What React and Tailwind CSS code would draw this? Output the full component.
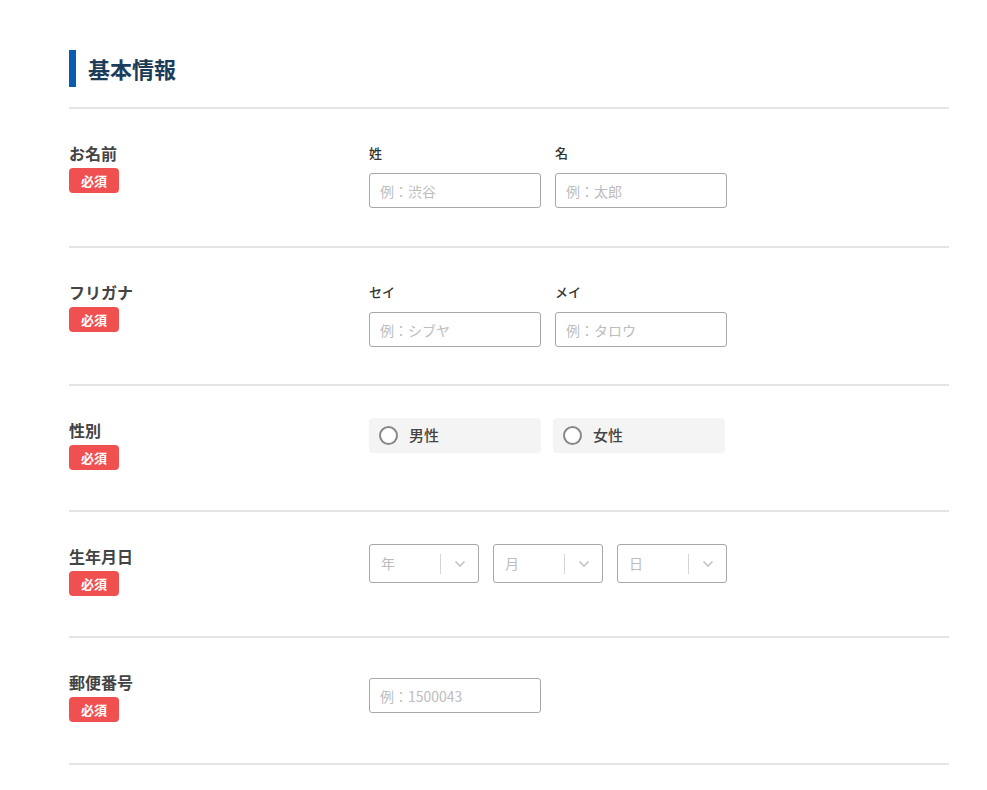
import React from "react";

const font = { fontFamily: '"Noto Sans CJK JP", "Noto Sans", sans-serif' };

function Required() {
  return (
    <span className="mt-[3px] flex h-[25px] w-[50px] items-center justify-center rounded-[4px] bg-[#f05050] text-[13px] font-bold text-white">
      必須
    </span>
  );
}

function Row({ label, gap = "gap-[14px]", pb = "pb-[40px]", children }) {
  return (
    <div className={`flex border-b-2 border-[#e4e4e4] pt-[32px] ${pb}`}>
      <div className="w-[300px] shrink-0">
        <div className="text-[16px] font-bold leading-6 text-[#444]">{label}</div>
        <Required />
      </div>
      <div className={`flex ${gap}`}>{children}</div>
    </div>
  );
}

function TextField({ sub, placeholder, extra = "" }) {
  return (
    <div className={`flex w-[172px] flex-col ${extra}`}>
      {sub && <div className="mb-[8px] text-[13px] font-medium leading-6 text-[#333]">{sub}</div>}
      <input
        placeholder={placeholder}
        className="h-[35px] w-full rounded-[3px] border border-[#a8a8a8] px-[10px] text-[14px] text-[#333] placeholder:text-[#bdbdbd] outline-none"
      />
    </div>
  );
}

function Radio({ label }) {
  return (
    <label className="flex h-[35px] w-[172px] items-center gap-[11px] rounded-[4px] bg-[#f4f4f4] px-[10px] text-[15px] font-medium text-[#444]">
      <span className="h-[19px] w-[19px] rounded-full border-2 border-[#888] bg-white" />
      {label}
    </label>
  );
}

function SelectBox({ label }) {
  return (
    <div className="flex h-[39px] w-[110px] items-center rounded-[3px] border border-[#a8a8a8]">
      <span className="flex-1 pl-[11px] text-[14px] text-[#bdbdbd]">{label}</span>
      <span className="h-[20px] w-px bg-[#d4d4d4]" />
      <span className="flex w-[37px] items-center justify-center">
        <svg width="12" height="8" viewBox="0 0 12 8" fill="none">
          <path d="M1.5 1.5 6 6l4.5-4.5" stroke="#c4c4c4" strokeWidth="1.6" />
        </svg>
      </span>
    </div>
  );
}

export default function App() {
  return (
    <div className="min-h-screen bg-white pt-[50px] pl-[69px]" style={font}>
      <div className="w-[880px]">
        {/* heading */}
        <div className="flex items-center gap-[12px] border-b-2 border-[#e4e4e4] pb-[20px]">
          <span className="h-[37px] w-[7px] bg-[#0a5cb0]" />
          <h2 className="text-[22px] font-bold text-[#1c3d5a]">基本情報</h2>
        </div>

        <Row label="お名前" pb="pb-[38px]">
          <TextField sub="姓" placeholder="例：渋谷" />
          <TextField sub="名" placeholder="例：太郎" />
        </Row>

        <Row label="フリガナ" pb="pb-[37px]">
          <TextField sub="セイ" placeholder="例：シブヤ" />
          <TextField sub="メイ" placeholder="例：タロウ" />
        </Row>

        <Row label="性別" gap="gap-[12px]">
          <Radio label="男性" />
          <Radio label="女性" />
        </Row>

        <Row label="生年月日">
          <SelectBox label="年" />
          <SelectBox label="月" />
          <SelectBox label="日" />
        </Row>

        <Row label="郵便番号" pb="pb-[41px]">
          <TextField placeholder="例：1500043" extra="mt-[8px]" />
        </Row>
      </div>
    </div>
  );
}
